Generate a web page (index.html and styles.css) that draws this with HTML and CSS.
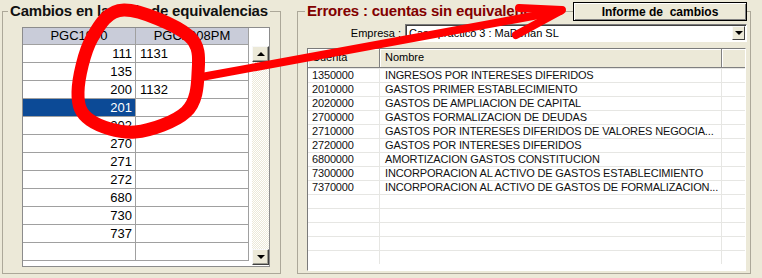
FILE: index.html
```html
<!DOCTYPE html>
<html>
<head>
<meta charset="utf-8">
<title>Cambios en la tabla de equivalencias</title>
<link rel="stylesheet" href="styles.css">
</head>
<body>

<div class="window">

  <!--left group: equivalence table-->
  <fieldset class="group group-left">
    <legend>Cambios en la tabla de equivalencias</legend>
    <div class="grid">
      <table class="grid-table">
        <colgroup><col class="c1"><col class="c2"></colgroup>
        <tr><th>PGC1990</th><th>PGC2008PM</th></tr>
        <tr><td class="num">111</td><td>1131</td></tr>
        <tr><td class="num">135</td><td></td></tr>
        <tr><td class="num">200</td><td>1132</td></tr>
        <tr class="sel"><td class="num">201</td><td></td></tr>
        <tr><td class="num">202</td><td></td></tr>
        <tr><td class="num">270</td><td></td></tr>
        <tr><td class="num">271</td><td></td></tr>
        <tr><td class="num">272</td><td></td></tr>
        <tr><td class="num">680</td><td></td></tr>
        <tr><td class="num">730</td><td></td></tr>
        <tr><td class="num">737</td><td></td></tr>
        <tr><td class="num"></td><td></td></tr>
      </table>
      <div class="vscroll">
        <div class="sbtn"><span class="tri-up"></span></div>
        <div class="track"></div>
        <div class="sbtn"><span class="tri-down"></span></div>
      </div>
    </div>
  </fieldset>

  <!--right group: accounts without equivalence-->
  <fieldset class="group group-right">
    <legend class="legend-red">Errores : cuentas sin equivalencias</legend>
    <div class="empresa-row">
      <label>Empresa :</label>
      <div class="combo">
        <span class="combo-text">Caso práctico 3 : MaDerian SL</span>
        <div class="combo-btn"><span class="tri-down"></span></div>
      </div>
    </div>
    <div class="list">
      <div class="list-head">
        <div class="hcell h-cuenta">Cuenta</div>
        <div class="hcell h-nombre">Nombre</div>
        <div class="hcell h-fill"></div>
      </div>
      <div class="lrow"><div>1350000</div><div>INGRESOS POR INTERESES DIFERIDOS</div><div></div></div>
      <div class="lrow"><div>2010000</div><div>GASTOS PRIMER ESTABLECIMIENTO</div><div></div></div>
      <div class="lrow"><div>2020000</div><div>GASTOS DE AMPLIACION DE CAPITAL</div><div></div></div>
      <div class="lrow"><div>2700000</div><div>GASTOS FORMALIZACION DE DEUDAS</div><div></div></div>
      <div class="lrow"><div>2710000</div><div>GASTOS POR INTERESES DIFERIDOS DE VALORES NEGOCIA...</div><div></div></div>
      <div class="lrow"><div>2720000</div><div>GASTOS POR INTERESES DIFERIDOS</div><div></div></div>
      <div class="lrow"><div>6800000</div><div>AMORTIZACION GASTOS CONSTITUCION</div><div></div></div>
      <div class="lrow"><div>7300000</div><div>INCORPORACION AL ACTIVO DE GASTOS ESTABLECIMIENTO</div><div></div></div>
      <div class="lrow"><div>7370000</div><div>INCORPORACION AL ACTIVO DE GASTOS DE FORMALIZACION...</div><div></div></div>
      <div class="lrow"><div></div><div></div><div></div></div>
      <div class="lrow"><div></div><div></div><div></div></div>
      <div class="lrow"><div></div><div></div><div></div></div>
      <div class="lrow"><div></div><div></div><div></div></div>
      <div class="lrow"><div></div><div></div><div></div></div>
    </div>
  </fieldset>

  <button class="informe">Informe de  cambios</button>

  <!--red marks drawn over the screenshot-->
  <svg class="marks" width="762" height="278" viewBox="0 0 762 278">
    <path d="M124,10 C140.2,9.7 176.7,25.3 189,36 C201.3,46.7 198.5,61.3 198,74 C197.5,86.7 196.5,102.3 186,112 C175.5,121.7 151,130.7 135,132 C119,133.3 99.5,126.7 90,120 C80.5,113.3 77.7,105.7 78,92 C78.3,78.3 84.3,51.7 92,38 C99.7,24.3 107.8,10.3 124,10 Z" fill="none" stroke="#ff0000" stroke-width="13"/>
    <line x1="196" y1="78" x2="560" y2="11" stroke="#ff0000" stroke-width="8" stroke-linecap="round"/>
    <polyline points="519,8 562,10 516,35" fill="none" stroke="#ff0000" stroke-width="8" stroke-linecap="round" stroke-linejoin="round"/>
  </svg>

</div>

</body>
</html>
```

FILE: styles.css
```css
* {box-sizing: border-box;}

body{
  margin:0px;
  background:#ece9d8;
  font-family:"Liberation Sans", Arial, sans-serif;
  font-size:11px;
  color:#000;
}

.window{
  position:relative;
  width:762px;
  height:278px;
  display:flex;
  align-items:flex-start;
  overflow:hidden;
}

/*group boxes*/

.group{
  margin:2px 0px 0px 0px;
  border:1px solid #aca899;
  height:272px;
  min-width:0;
}

.group legend{
  padding:0px 2px;
  font-size:15px;
  line-height:18px;
  font-weight:bold;
  letter-spacing:-0.2px;
  color:#111;
}

.group-left{
  margin-left:2px;
  width:279px;
  padding:0px 0px 0px 5px;
}

.group-right{
  margin-left:16px;
  width:454px;
  padding:0px 3px 0px 7px;
}

.group .legend-red{
  color:#820000;
}

/*left grid*/

.grid{
  margin:7px 0px 0px 14px;
  width:248px;
  height:240px;
  border:1px solid #8c8c8c;
  background:#fff;
  display:flex;
  align-items:flex-start;
}

.grid-table{
  border-collapse:separate;
  border-spacing:0px;
  table-layout:fixed;
  width:226px;
  font-family:"Liberation Sans Narrow", "Liberation Sans", sans-serif;
  font-stretch:condensed;
  font-size:13px;
}

.grid-table col.c1{ width:113px; }
.grid-table col.c2{ width:113px; }

.grid-table th{
  height:17px;
  padding:0px;
  background:#c9ccd9;
  border-right:1px solid #a0a0a0;
  border-bottom:1px solid #a0a0a0;
  font-weight:normal;
  line-height:16px;
  text-align:center;
}

.grid-table td{
  height:18px;
  padding:0px 0px 0px 4px;
  border-right:1px solid #a0a0a0;
  border-bottom:1px solid #a0a0a0;
  line-height:17px;
  white-space:nowrap;
}

.grid-table td.num{
  text-align:right;
  padding:0px 3px 0px 0px;
}

.grid-table tr.sel td.num{
  background:#0c4a96;
  color:#fff;
}

.vscroll{
  width:20px;
  height:238px;
  padding:18px 0px 1px 3px;
  display:flex;
  flex-direction:column;
}

.vscroll .track{
  flex:1;
  background:repeating-conic-gradient(#ece9d8 0% 25%, #fff 0% 50%);
  background-size:2px 2px;
}

.sbtn{
  height:16px;
  width:17px;
  background:#ece9d8;
  border:1px solid;
  border-color:#f8f8f8 #404040 #404040 #f8f8f8;
  box-shadow:inset -1px -1px 0px #9d9d92;
  display:flex;
  align-items:center;
  justify-content:center;
}

.tri-up{
  width:0px;
  height:0px;
  border-left:4px solid transparent;
  border-right:4px solid transparent;
  border-bottom:4px solid #000;
}

.tri-down{
  width:0px;
  height:0px;
  border-left:4px solid transparent;
  border-right:4px solid transparent;
  border-top:4px solid #000;
}

/*right side*/

.empresa-row{
  margin-top:4px;
  display:flex;
  justify-content:flex-end;
  align-items:center;
}

.empresa-row label{
  margin-right:4px;
  font-size:11px;
}

.combo{
  width:342px;
  height:18px;
  background:#fff;
  border:1px solid;
  border-color:#7a7a7a #fff #fff #7a7a7a;
  box-shadow:inset 1px 1px 0px #404040;
  display:flex;
  align-items:center;
}

.combo-text{
  flex:1;
  padding-left:3px;
  line-height:14px;
}

.combo-btn{
  width:13px;
  height:14px;
  margin-right:1px;
  background:#ece9d8;
  border:1px solid;
  border-color:#f8f8f8 #404040 #404040 #f8f8f8;
  display:flex;
  align-items:center;
  justify-content:center;
}

.list{
  margin:6px 0px 0px 2px;
  width:439px;
  height:223px;
  background:#fff;
  border:1px solid;
  border-color:#7a7a7a #fff #fff #7a7a7a;
  overflow:hidden;
}

.list-head{
  display:grid;
  grid-template-columns:72px 342px 1fr;
  height:19px;
  background:#ece9d8;
  border-bottom:1px solid #808080;
}

.hcell{
  border-right:1px solid #808080;
  box-shadow:inset 1px 1px 0px #fff;
  line-height:17px;
  padding-left:4px;
}

.h-nombre{ padding-left:5px; }
.h-fill{ border-right:0px; }

.lrow{
  display:grid;
  grid-template-columns:72px 342px 1fr;
  height:14px;
  border-top:1px solid #e6e6e3;
}

.lrow div{
  border-right:1px solid #e6e6e3;
  padding-left:4px;
  line-height:13px;
  letter-spacing:-0.15px;
  white-space:nowrap;
  overflow:hidden;
  color:#111;
}

.lrow div:nth-child(2){ padding-left:5px; }
.lrow div:nth-child(3){ border-right:0px; }

/*button over the group border*/

.informe{
  position:absolute;
  left:573px;
  top:2px;
  width:174px;
  height:19px;
  margin:0px;
  padding:0px;
  background:#ece9d8;
  border:1px solid #000;
  box-shadow:inset 1px 1px 0px #fff, inset -1px -1px 0px #808080;
  font-family:"Liberation Sans", Arial, sans-serif;
  font-size:12px;
  font-weight:bold;
  white-space:pre;
  color:#000;
}

/*annotation*/

.marks{
  position:absolute;
  left:0px;
  top:0px;
  pointer-events:none;
}
```
